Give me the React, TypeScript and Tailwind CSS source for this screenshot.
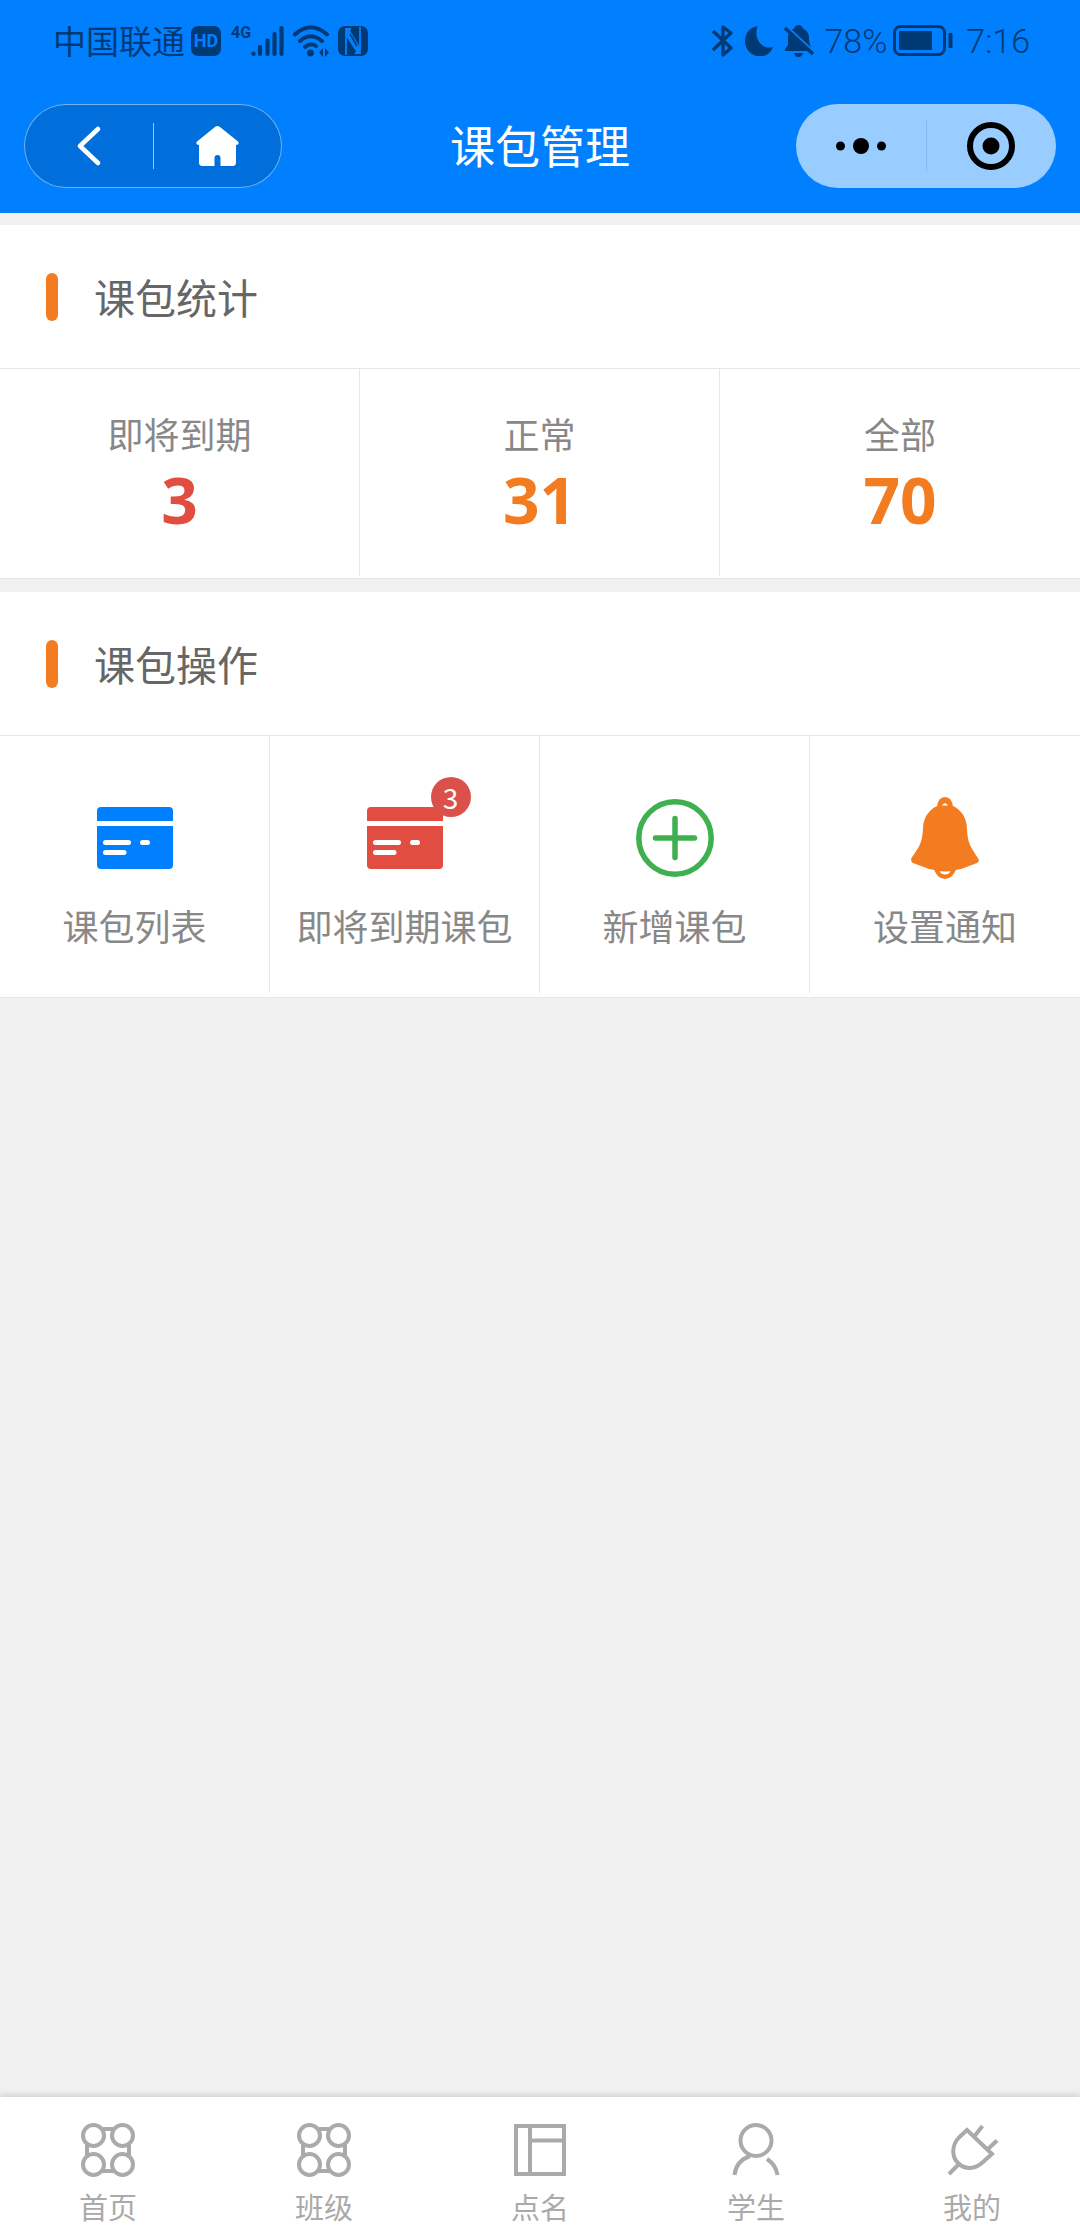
import type { ReactNode } from "react";

const stats = [
  { label: "即将到期", value: 3, color: "text-[#e24d42]" },
  { label: "正常", value: 31, color: "text-[#f27c1f]" },
  { label: "全部", value: 70, color: "text-[#f27c1f]" },
];

function StatusBar() {
  return (
    <div className="flex h-[82px] items-center justify-between pl-[53px] pr-[50px] text-[#003a75]">
      <div className="flex items-center">
        <span className="text-[33px] leading-none">中国联通</span>
        <span className="ml-1.5 flex size-[30px] items-center justify-center rounded-[7px] bg-[#003a75] font-[Roboto] text-lg font-bold leading-none text-[#0080ff]">
          HD
        </span>
        <span className="ml-[10px] self-start font-['Liberation_Sans_Narrow',Roboto,sans-serif] text-base font-bold leading-none">
          4G
        </span>
        <svg width="33" height="32" viewBox="0 0 33 32" fill="none" stroke="currentColor" strokeWidth="4.200" strokeLinecap="round" aria-hidden>
          <path d="M2.500 28.500v.5M9 22v7M16.500 15.500V29M23.500 9v20M30.500 3v26" />
        </svg>
        <svg className="ml-[9px]" width="37" height="32" viewBox="0 0 37 32" fill="none" stroke="currentColor" strokeWidth="4" strokeLinecap="round" aria-hidden>
          <path d="M2 9.500Q17.500-5 34 9.500M7 16Q17.500 6.500 29 16M12 22Q17.500 17 23 21" />
          <circle cx="17.500" cy="28" r="3.400" fill="currentColor" stroke="none" />
          <path d="M30 23v9l-4-4.500zM32 23v9l4-4.500z" fill="currentColor" stroke="none" />
        </svg>
        <svg className="ml-2" width="30" height="30" viewBox="0 0 30 30" aria-hidden>
          <rect width="30" height="30" rx="7" fill="currentColor" />
          <path d="M8 29V3L13 3M17 27h5V1" fill="none" stroke="#0080ff" strokeWidth="1.800" />
          <path d="M8 3h3l11 18v6h-3L8 10z" fill="#0080ff" />
          <path d="M12 8l7 12" stroke="currentColor" strokeWidth="1.500" />
        </svg>
      </div>
      <div className="flex items-center">
        <svg width="21" height="32" viewBox="0 0 21 32" fill="none" stroke="currentColor" strokeWidth="3.400" aria-hidden>
          <path d="M1 6l18 17-8 7V2l8 6L1 25" strokeLinejoin="round" />
        </svg>
        <svg className="ml-3" width="28" height="30" viewBox="0 0 28 30" fill="currentColor" aria-hidden>
          <path d="M12.500 0C3 2 0 9 0 15.500A15 15 0 0 0 15 30.500C21 30.500 26 27 28 21C18 24 8 14 12.500 0z" />
        </svg>
        <svg className="ml-[11px]" width="31" height="32" viewBox="0 0 31 32" fill="currentColor" aria-hidden>
          <path d="M4 12Q4 6 10 3.500Q11 0 14.500 0T19 3.500Q25 6 25 13Q25 20 29 26H1v-2l3-4zM10 28h9q-1 4-4.500 4T10 28z" />
          <path d="M1 0l28 26" stroke="#0080ff" strokeWidth="2.500" />
          <path d="M1 3l28 26" stroke="currentColor" strokeWidth="3.500" />
        </svg>
        <span className="ml-[9px] font-[Roboto] text-[34px] font-light leading-none">78%</span>
        <svg className="ml-1.5" width="60" height="32" viewBox="0 0 60 32" fill="none" aria-hidden>
          <rect x="1.500" y="1.500" width="50" height="28" rx="6" stroke="currentColor" strokeWidth="3" />
          <rect x="6" y="6" width="33" height="19" rx="1" fill="currentColor" />
          <rect x="55.500" y="8" width="4" height="15" rx="1" fill="currentColor" />
        </svg>
        <span className="ml-[13px] font-[Roboto] text-[34px] font-light leading-none">7:16</span>
      </div>
    </div>
  );
}

function TitleBar() {
  return (
    <div className="grid h-[131px] grid-cols-[1fr_auto_1fr] items-center px-6 pb-[3px]">
      <div className="flex h-[84px] w-[258px] items-center rounded-full border border-white/45 bg-black/14 text-white">
        <button type="button" aria-label="返回" className="flex h-full flex-1 items-center justify-center">
          <svg width="24" height="40" viewBox="0 0 24 40" fill="none" stroke="currentColor" strokeWidth="4.500" strokeLinecap="round" strokeLinejoin="round" aria-hidden>
            <path d="M21 3L3 20l18 17" />
          </svg>
        </button>
        <span className="h-[46px] w-px bg-white/60" />
        <button type="button" aria-label="主页" className="flex h-full flex-1 items-center justify-center">
          <svg width="43" height="40" viewBox="0 0 43 40" fill="currentColor" aria-hidden>
            <path d="M19 1Q21.500-1 24 1L42 15.500Q44 18.500 40 19V36.500Q40 40 36.500 40H24.500V32Q24.500 29 21.500 29T18.500 32V40H6.500Q3 40 3 36.500V19Q-1 18.500 1 15.500z" />
          </svg>
        </button>
      </div>
      <h1 className="text-[45px] leading-none text-white">课包管理</h1>
      <div className="flex h-[84px] w-[260px] items-center justify-self-end rounded-full bg-[#99ccff] text-black">
        <button type="button" aria-label="更多" className="flex h-full flex-1 items-center justify-center">
          <svg width="50" height="16" viewBox="0 0 50 16" fill="currentColor" aria-hidden>
            <circle cx="4.500" cy="8" r="4.500" />
            <circle cx="25" cy="8" r="8" />
            <circle cx="45.500" cy="8" r="4.500" />
          </svg>
        </button>
        <span className="h-[50px] w-px bg-[#86b8ea]" />
        <button type="button" aria-label="关闭" className="flex h-full flex-1 items-center justify-center">
          <svg width="48" height="48" viewBox="0 0 48 48" aria-hidden>
            <circle cx="24" cy="24" r="21" fill="none" stroke="currentColor" strokeWidth="6" />
            <circle cx="24" cy="24" r="8.500" fill="currentColor" />
          </svg>
        </button>
      </div>
    </div>
  );
}

function SectionTitle({ children }: { children: ReactNode }) {
  return (
    <div className="flex h-36 items-center gap-9 border-b border-[#e6e6e6] pl-[46px]">
      <span className="h-12 w-3 rounded-full bg-[#f27c1f]" />
      <h2 className="pt-1 text-[41px] leading-none text-[#666]">{children}</h2>
    </div>
  );
}

function CardIcon() {
  return (
    <svg width="76" height="62" viewBox="0 0 76 62" fill="currentColor" aria-hidden>
      <path d="M0 14V4Q0 0 4 0H72Q76 0 76 4V14zM0 19H76V58Q76 62 72 62H4Q0 62 0 58z" />
      <path d="M8.500 35.500H31.500M45.500 35.500H50.500M8.500 45.500H27" stroke="#fff" strokeWidth="5" strokeLinecap="round" />
    </svg>
  );
}

function PlusIcon() {
  return (
    <svg width="78" height="78" viewBox="0 0 78 78" fill="none" stroke="currentColor" strokeWidth="5.500" strokeLinecap="round" aria-hidden>
      <circle cx="39" cy="39" r="36.200" />
      <path d="M39 19.500v39M19.500 39h39" />
    </svg>
  );
}

function BellIcon() {
  return (
    <svg width="68" height="82" viewBox="0 0 68 82" fill="currentColor" aria-hidden>
      <path d="M26 9C17 13 12 22 12 32C11 47 8 50 0 62Q0 65 2 66L18 72Q34 76 50 72L66 66Q68.500 65 67.500 62C60 50 56.500 47 56 32C56 22 51 13 42 9z" />
      <path d="M26 10Q27 0 34 0T42 10z" />
      <path d="M22 70Q26 82 34 82T46 70z" />
      <path d="M31 8.500Q34 4 37 8.500zM28.500 74Q34 75 39.500 74Q38 77.500 34 77.500T28.500 74z" fill="#fff" />
    </svg>
  );
}

const actions = [
  { label: "课包列表", color: "text-[#0080ff]", icon: <CardIcon /> },
  { label: "即将到期课包", color: "text-[#e24d42]", icon: <CardIcon />, badge: 3 },
  { label: "新增课包", color: "text-[#3fb04f]", icon: <PlusIcon /> },
  { label: "设置通知", color: "text-[#f27c1f]", icon: <BellIcon /> },
];

const cloverIcon = (
  <>
    <path d="M22 6h10M22 48h10M6 22v10M48 22v10" />
    <circle cx="12.500" cy="12.500" r="10.500" />
    <circle cx="41.500" cy="12.500" r="10.500" />
    <circle cx="12.500" cy="41.500" r="10.500" />
    <circle cx="41.500" cy="41.500" r="10.500" />
  </>
);

const tabs = [
  { label: "首页", href: "#home", icon: cloverIcon },
  { label: "班级", href: "#class", icon: cloverIcon },
  {
    label: "点名",
    href: "#roll",
    icon: <path d="M3 3h48v48H3zM17 3v48M17 17.500h34" />,
  },
  {
    label: "学生",
    href: "#student",
    icon: (
      <>
        <circle cx="27" cy="17.500" r="15.500" />
        <path d="M21 33Q7 38 5.500 52M38 36Q47 42 48.500 52" />
      </>
    ),
  },
  {
    label: "我的",
    href: "#me",
    icon: <path d="M22 7L14 14.500C6 23 7 34 13 40C20 47 30 46.500 38 39L47 31zM30 12.500l7.500-9.500M43 26l9-8.500M14 41l-10 10" />,
  },
];

export default function App() {
  return (
    <div className="flex min-h-screen flex-col bg-[#f0f0f0] font-['Noto_Sans','Noto_Sans_CJK_SC',sans-serif]">
      <header className="bg-[#0080ff]">
        <StatusBar />
        <TitleBar />
      </header>

      <main className="flex flex-1 flex-col gap-[13px] pt-3">
        <section className="border-b border-[#e6e6e6] bg-white pb-0.5">
          <SectionTitle>课包统计</SectionTitle>
          <dl className="grid grid-cols-3 divide-x divide-[#e6e6e6] text-center">
            {stats.map((s) => (
              <div key={s.label} className="pb-9 pt-[43px]">
                <dt className="text-4xl leading-[48px] text-[#888]">{s.label}</dt>
                <dd className={`text-[64px] font-bold leading-[80px] ${s.color}`}>{s.value}</dd>
              </div>
            ))}
          </dl>
        </section>

        <section className="border-b border-[#e6e6e6] bg-white pb-1">
          <SectionTitle>课包操作</SectionTitle>
          <div className="grid grid-cols-4 divide-x divide-[#e6e6e6]">
            {actions.map((a) => (
              <button key={a.label} type="button" className="flex flex-col items-center pb-[41px] pt-[61px]">
                <span className={`relative flex h-[82px] items-center ${a.color}`}>
                  {a.icon}
                  {a.badge && (
                    <span className="absolute -right-7 -top-5 flex size-10 items-center justify-center rounded-full bg-[#dc504b] font-['Noto_Sans_CJK_SC',sans-serif] text-[28px] leading-none text-white">
                      {a.badge}
                    </span>
                  )}
                </span>
                <span className="mt-[25px] whitespace-nowrap text-4xl leading-[48px] text-[#888]">{a.label}</span>
              </button>
            ))}
          </div>
        </section>
      </main>

      <nav className="grid grid-cols-5 bg-white shadow-[0_-2px_6px_rgba(0,0,0,0.14)]">
        {tabs.map((t) => (
          <a key={t.label} href={t.href} className="flex flex-col items-center pb-3.5 pt-[26px] text-[#aaa]">
            <svg width="54" height="54" viewBox="0 0 54 54" fill="none" stroke="currentColor" strokeWidth="4" aria-hidden>
              {t.icon}
            </svg>
            <span className="mt-[13px] text-[29px] leading-9">{t.label}</span>
          </a>
        ))}
      </nav>
    </div>
  );
}
